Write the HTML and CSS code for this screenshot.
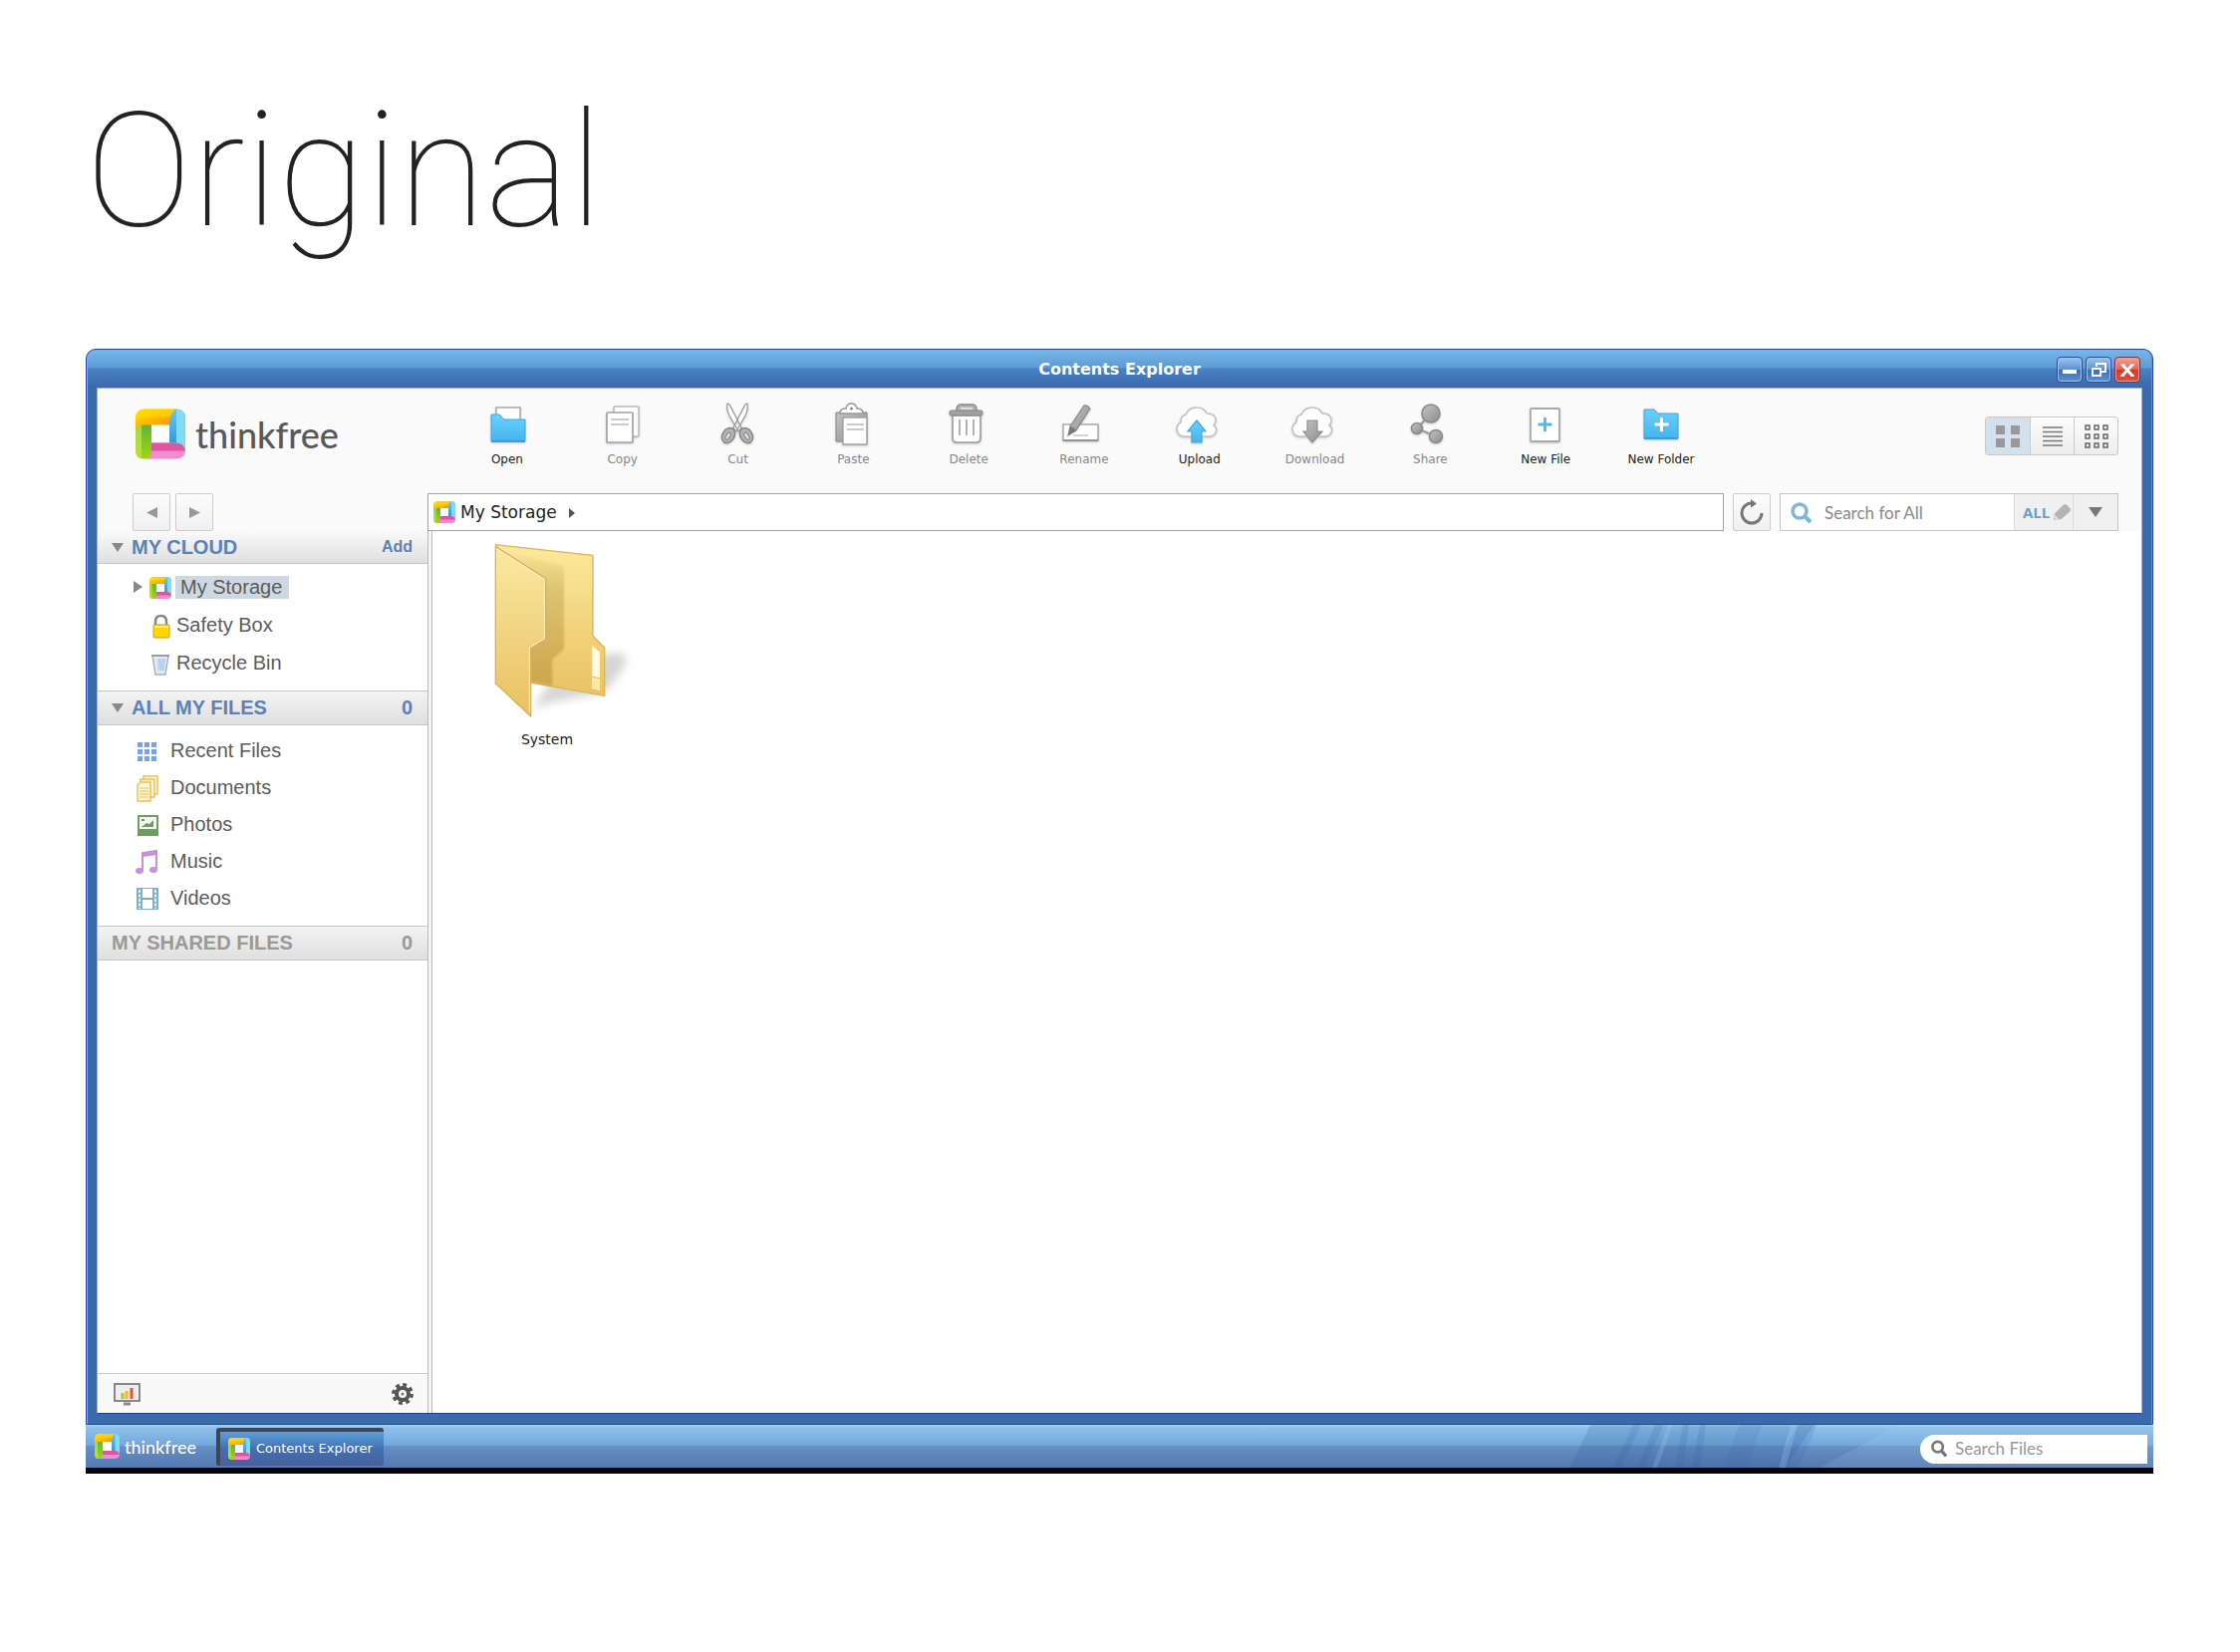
FILE: index.html
```html
<!DOCTYPE html>
<html lang="en">
<head>
<meta charset="utf-8">
<title>Contents Explorer</title>
<link rel="stylesheet" href="styles.css">
</head>
<body>
<svg class="defs" aria-hidden="true">
  <defs>
    <linearGradient id="g-blue" x1="0" y1="0" x2="0" y2="1"><stop offset="0" stop-color="#68d2fb"/><stop offset="1" stop-color="#47b3ec"/></linearGradient>
    <linearGradient id="g-grey" x1="0" y1="0" x2="1" y2="1"><stop offset="0" stop-color="#c4c4c4"/><stop offset="1" stop-color="#8c8c8c"/></linearGradient>
    <linearGradient id="l-yellow" x1="0" y1="0" x2="1" y2="1"><stop offset="0" stop-color="#ffe800"/><stop offset="1" stop-color="#fb8200"/></linearGradient>
    <linearGradient id="l-blue" x1="0" y1="0" x2="0" y2="1"><stop offset="0" stop-color="#6cc4f0"/><stop offset="1" stop-color="#2890d6"/></linearGradient>
    <linearGradient id="l-green" x1="0" y1="0" x2="0" y2="1"><stop offset="0" stop-color="#5cb040"/><stop offset="1" stop-color="#9fd610"/></linearGradient>
    <linearGradient id="f-back" x1="0" y1="0" x2="0" y2="1"><stop offset="0" stop-color="#fbe99c"/><stop offset="1" stop-color="#eac262"/></linearGradient>
    <linearGradient id="f-front" x1="0" y1="0" x2="0" y2="1"><stop offset="0" stop-color="#fbe9a2"/><stop offset="1" stop-color="#e8c062"/></linearGradient>
    <linearGradient id="f-shade" x1="0" y1="0" x2="0" y2="1"><stop offset="0" stop-color="#a58c3c" stop-opacity="0"/><stop offset=".3" stop-color="#a58c3c" stop-opacity=".32"/><stop offset="1" stop-color="#a07828" stop-opacity=".4"/></linearGradient>
    <filter id="blur" x="-30%" y="-30%" width="160%" height="160%"><feGaussianBlur stdDeviation="12"/></filter>
    <filter id="soft" x="-10%" y="-10%" width="120%" height="120%"><feGaussianBlur stdDeviation="3"/></filter>
    <symbol id="logo" viewBox="0 0 50 50">
      <path d="M15 15h20v20H15z" fill="#fff"/>
      <path d="M0 12h16v38H8q-8 0-8-9z" fill="url(#l-green)"/>
      <path d="M0 14l6 2v34q-6-1-6-9z" fill="#c3e04a" opacity=".75"/>
      <path d="M13 34h28q9 1 9 8t-9 8H12q5-3 4-16z" fill="#f58ad0"/>
      <path d="M16 34h25q8 0 9 8H16z" fill="#de56a0"/>
      <path d="M34 5q3-5 8-5 8 1 8 9v32q-2-7-9-7h-7z" fill="url(#l-blue)"/>
      <path d="M41 0q9 0 9 9v32q-2-7-9-7z" fill="#7fdcf6"/>
      <path d="M9 0h32q-7 3-7 16H8q-6 0-8 5V9q0-9 9-9z" fill="url(#l-yellow)"/>
      <path d="M9 0h32q-4 2-6 8H1q1-8 8-8z" fill="#ffd800" opacity=".65"/>
    </symbol>
    <symbol id="cloud" viewBox="0 0 44 44">
      <path d="M9 34q-7 0-8-7 0-5 4-7 0-7 5-8 3-7 11-7 7 0 10 6 9 0 9 7 0 3-2 5 4 3 2 7-2 4-7 4z" fill="#fff" stroke="#c2c2c2" stroke-width="1.6"/>
    </symbol>
  </defs>
</svg>

<h1 class="heading">Original</h1>

<main class="desktop">
  <section class="window">
    <header class="titlebar">
      <h2 class="titlebar-text">Contents Explorer</h2>
      <div class="window-buttons">
        <button class="win-btn" aria-label="Minimize"><svg viewBox="0 0 26 26"><rect x="6" y="13" width="14" height="4" fill="#fff"/></svg></button>
        <button class="win-btn" aria-label="Restore"><svg viewBox="0 0 26 26"><path d="M11 10V7h9v8h-4M7 12h8v7H7z" fill="none" stroke="#fff" stroke-width="2"/></svg></button>
        <button class="win-btn win-close" aria-label="Close"><svg viewBox="0 0 26 26"><path d="M8 8l10 11M18 8L8 19" stroke="#fff" stroke-width="3"/><path d="M6.500 8h4M16 8h4M6 19h4M16 19h4" stroke="#fff" stroke-width="1.500"/></svg></button>
      </div>
    </header>

    <div class="client">
      <div class="toolbar">
        <a class="brand" href="#"><svg class="brand-logo"><use href="#logo"/></svg><span>thinkfree</span></a>
        <nav class="actions">
          <button class="action"><svg viewBox="0 0 44 44"><path d="M11 20V5h24v15" fill="#fff" stroke="#aaa" stroke-width="1.500"/><path d="M6 39V12h8l5 5h21v22z" fill="url(#g-blue)" stroke="#45a5e0"/><path d="M6 39h34" stroke="#2e96e0" stroke-width="1.500"/></svg>Open</button>
          <button class="action is-off"><svg viewBox="0 0 44 44"><rect x="13" y="4" width="25" height="30" rx="1" fill="#fff" stroke="#bbb" stroke-width="1.500"/><rect x="6" y="10" width="26" height="30" rx="1" fill="#fff" stroke="#a2a2a2" stroke-width="1.700"/><path d="M10 17h18M10 22h18" stroke="#999" stroke-width="1.200"/></svg>Copy</button>
          <button class="action is-off"><svg viewBox="0 0 44 44"><path d="M11 1q-1 6 2 12l9 16 3-4L13 2zM31 1q1 6-2 12l-9 16-3-4L29 2z" fill="#fff" stroke="#999" stroke-width="1.200"/><ellipse cx="12" cy="33" rx="6" ry="8" transform="rotate(32 12 33)" fill="#b4b4b4" stroke="#858585" stroke-width="1.400"/><ellipse cx="30" cy="33" rx="6" ry="8" transform="rotate(-32 30 33)" fill="#b4b4b4" stroke="#858585" stroke-width="1.400"/><ellipse cx="11.500" cy="34" rx="2" ry="4" transform="rotate(32 12 34)" fill="#ddd" stroke="#808080"/><ellipse cx="30.500" cy="34" rx="2" ry="4" transform="rotate(-32 30 34)" fill="#ddd" stroke="#808080"/></svg>Cut</button>
          <button class="action is-off"><svg viewBox="0 0 44 44"><path d="M5 10h31v29H5z" fill="url(#g-grey)" stroke="#888"/><path d="M9 11q0-5 6-5 1-5 5.500-5T26 6q6 0 6 5z" fill="#fff" stroke="#999" stroke-width="1.400"/><circle cx="20.500" cy="6" r="1.500" fill="#888"/><rect x="12" y="15" width="24" height="27" fill="#fff" stroke="#a2a2a2" stroke-width="1.500"/><path d="M16 22h17M16 27h17" stroke="#999" stroke-width="1.200"/></svg>Paste</button>
          <button class="action is-off"><svg viewBox="0 0 44 44"><path d="M10 8q0-6 4-6h12q4 0 4 6" fill="#b4b4b4" stroke="#8a8a8a" stroke-width="1.500"/><path d="M14 6h12" stroke="#eee" stroke-width="1.500"/><path d="M6 13h28v23q0 4-4 4H10q-4 0-4-4z" fill="#fff" stroke="#9a9a9a" stroke-width="1.600"/><rect x="3" y="8" width="33" height="5" rx="1.500" fill="#a0a0a0" stroke="#858585"/><path d="M13 17v16M20 17v16M27 17v16" stroke="#999" stroke-width="1.500"/></svg>Delete</button>
          <button class="action is-off"><svg viewBox="0 0 44 44"><rect x="1" y="22" width="35" height="16" fill="#fff" stroke="#aaa" stroke-width="1.500"/><path d="M1 38h35" stroke="#888" stroke-width="1.500"/><path d="M11 33h15" stroke="#aaa"/><path d="M6 33l2-9L22 3q3-1 6 3l-14 22z" fill="url(#g-grey)" stroke="#8a8a8a" stroke-width="1.200"/><path d="M6 33l2-9q4 1 6 4z" fill="#777"/></svg>Rename</button>
          <button class="action"><svg viewBox="0 0 44 44"><use href="#cloud" x="-2" width="44" height="44"/><path d="M19 18l9 11h-4v11H14V29h-4z" fill="url(#g-blue)" stroke="#45a5e0" stroke-width="1.200"/></svg>Upload</button>
          <button class="action is-off"><svg viewBox="0 0 44 44"><use href="#cloud" x="-2" width="44" height="44"/><path d="M14 18h10v11h5L19 40l-9-11h4z" fill="url(#g-grey)" stroke="#909090" stroke-width="1.200"/></svg>Download</button>
          <button class="action is-off"><svg viewBox="0 0 44 44"><path d="M23 11L9 26l19 8" fill="none" stroke="#999" stroke-width="2"/><g fill="url(#g-grey)" stroke="#8a8a8a" stroke-width="1.500"><circle cx="23" cy="11" r="9"/><circle cx="9" cy="26" r="5.500"/><circle cx="28" cy="34" r="6.500"/></g></svg>Share</button>
          <button class="action"><svg viewBox="0 0 44 44"><rect x="7" y="6" width="29" height="33" rx="1" fill="#fff" stroke="#aaa" stroke-width="1.800"/><path d="M21.500 15v14M14.500 22h14" stroke="#52b8ea" stroke-width="2.800"/></svg>New File</button>
          <button class="action"><svg viewBox="0 0 44 44"><path d="M5 36V7h10l4 4h20v25z" fill="url(#g-blue)" stroke="#45a5e0"/><path d="M5 36h34" stroke="#2e96e0" stroke-width="1.500"/><path d="M22.500 15v14M15.500 22h14" stroke="#fff" stroke-width="3"/></svg>New Folder</button>
        </nav>
        <div class="views" role="group" aria-label="View">
          <button class="view is-on" aria-label="Large icons"><svg viewBox="0 0 24 24"><path d="M0 1h9v9H0zM15 1h9v9h-9zM0 14h9v9H0zM15 14h9v9h-9z" fill="#999"/></svg></button>
          <button class="view" aria-label="List"><svg viewBox="0 0 24 24"><path d="M2 3h20M2 7.500h20M2 12h20M2 16.500h20M2 21h20" stroke="#777" stroke-width="1.500"/></svg></button>
          <button class="view" aria-label="Small icons"><svg viewBox="0 0 24 24"><g fill="none" stroke="#666" stroke-width="1.500"><path d="M1 1h4v4H1zM10 1h4v4h-4zM19 1h4v4h-4zM1 10h4v4H1zM10 10h4v4h-4zM19 10h4v4h-4zM1 19h4v4H1zM10 19h4v4h-4zM19 19h4v4h-4z"/></g></svg></button>
        </div>
      </div>

      <div class="locbar">
        <div class="history">
          <button class="square" aria-label="Back"><svg viewBox="0 0 12 12"><path d="M12 0v12L0 6z" fill="#999"/></svg></button>
          <button class="square" aria-label="Forward"><svg viewBox="0 0 12 12"><path d="M0 0v12l12-6z" fill="#999"/></svg></button>
        </div>
        <div class="address"><svg class="mini-logo"><use href="#logo"/></svg><a href="#">My Storage</a><svg class="crumb" viewBox="0 0 6 10"><path d="M0 0v10l6-5z" fill="#555"/></svg></div>
        <button class="square" aria-label="Refresh"><svg class="refresh" viewBox="0 0 24 26"><path d="M12 4a10 10 0 1 0 10 10" fill="none" stroke="#777" stroke-width="3"/><path d="M11 0l6 4.500-6 4z" fill="#777"/></svg></button>
        <form class="search">
          <label class="search-field"><svg viewBox="0 0 22 22"><circle cx="9" cy="9" r="7" fill="none" stroke="#7fb6e0" stroke-width="3.500"/><path d="M14 14l6 6" stroke="#7fb6e0" stroke-width="4"/></svg><input type="text" placeholder="Search for All" aria-label="Search for All"></label>
          <button type="button" class="scope">ALL<svg viewBox="0 0 18 18"><path d="M0 17l1-7 9-9q2-1 3-1l5 5q0 2-1 3l-9 8z" fill="#b3b3b3"/><path d="M1 17v-6l5 5z" fill="#ddd"/></svg></button>
          <button type="button" class="scope-menu" aria-label="Search options"><svg viewBox="0 0 14 10"><path d="M0 0h14L7 10z" fill="#777"/></svg></button>
        </form>
      </div>

      <div class="panes">
        <aside class="sidebar">
          <div class="group-head"><svg class="tri" viewBox="0 0 12 9"><path d="M0 0h12L6 9z" fill="#888"/></svg><h3>MY CLOUD</h3><button class="add">Add</button></div>
          <ul class="tree cloud-list">
            <li><svg class="expand" viewBox="0 0 9 12"><path d="M0 0v12l9-6z" fill="#888"/></svg><svg class="icon"><use href="#logo"/></svg><a class="is-current" href="#">My Storage</a></li>
            <li><span class="expand"></span><svg class="icon" viewBox="0 0 22 24"><path d="M6 13V8q0-6 5.500-6T17 8v5" fill="none" stroke="#888" stroke-width="2.500"/><rect x="4" y="11" width="16" height="13" rx="1" fill="#ffd800" stroke="#c8a000"/><path d="M5 13h14" stroke="#fff07a" stroke-width="2"/></svg><a href="#">Safety Box</a></li>
            <li><span class="expand"></span><svg class="icon" viewBox="0 0 22 24"><path d="M3 4h16l-3 19H6z" fill="#dfeaf6" stroke="#aab4be" stroke-width="1.500"/><path d="M8 7h8l-1 12H9z" fill="#b5d3f2"/><path d="M2 4h18" stroke="#8a9096" stroke-width="1.500"/></svg><a href="#">Recycle Bin</a></li>
          </ul>
          <div class="group-head"><svg class="tri" viewBox="0 0 12 9"><path d="M0 0h12L6 9z" fill="#888"/></svg><h3>ALL MY FILES</h3><span class="count">0</span></div>
          <ul class="tree files-list">
            <li><svg class="icon" viewBox="0 0 24 24"><path d="M2 3h5v5H2zM9 3h5v5H9zM16 3h5v5h-5zM2 10h5v5H2zM9 10h5v5H9zM16 10h5v5h-5zM2 17h5v5H2zM9 17h5v5H9zM16 17h5v5h-5z" fill="#74a3ea"/></svg><a href="#">Recent Files</a></li>
            <li><svg class="icon" viewBox="0 0 24 24"><g fill="#fff6dc" stroke="#f2bd52" stroke-width="1.400"><path d="M8 0h14v18H8z"/><path d="M5 3h14v18H5z"/><path d="M2 9l3-3h10v19H2z"/></g><path d="M4 12h9M4 15h9M4 18h9M4 21h9" stroke="#f2bd52"/></svg><a href="#">Documents</a></li>
            <li><svg class="icon" viewBox="0 0 24 24"><path d="M2 2h21v21H2z" fill="#729a66"/><path d="M4 4h17v12H4z" fill="#f2f7f0"/><path d="M6 14l5-4 3 1 4-4v7zM6 6h3v2H6z" fill="#729a66"/></svg><a href="#">Photos</a></li>
            <li><svg class="icon" viewBox="0 0 24 24"><path d="M7 21V3l14-2v18" fill="none" stroke="#c68fd8" stroke-width="2"/><path d="M7 3l14-2v4L7 7z" fill="#c68fd8"/><ellipse cx="4" cy="21" rx="4" ry="3" fill="#c68fd8"/><ellipse cx="18" cy="20" rx="4" ry="3" fill="#c68fd8"/></svg><a href="#">Music</a></li>
            <li><svg class="icon" viewBox="0 0 24 24"><path d="M1 1h22v22H1z" fill="#7fb0c6"/><path d="M7 2h10v9H7zM7 13h10v9H7z" fill="#fff"/><path d="M4 3v19M20 3v19" stroke="#e4f1f6" stroke-width="2" stroke-dasharray="3 1.500"/></svg><a href="#">Videos</a></li>
          </ul>
          <div class="group-head is-muted"><h3>MY SHARED FILES</h3><span class="count">0</span></div>
          <div class="side-foot">
            <button class="plain" aria-label="Usage"><svg width="28" height="24" viewBox="0 0 28 24"><rect x="1" y="2" width="25" height="17" fill="#eee" stroke="#888" stroke-width="2"/><path d="M10 22h7" stroke="#888" stroke-width="3"/><path d="M9 17v-6" stroke="#a6c83c" stroke-width="3"/><path d="M13 17v-8" stroke="#f5b52c" stroke-width="3"/><path d="M18 17V6" stroke="#e8542c" stroke-width="3"/></svg></button>
            <button class="plain" aria-label="Settings"><svg width="22" height="22" viewBox="0 0 22 22"><circle cx="11" cy="11" r="9.200" fill="none" stroke="#555" stroke-width="3.500" stroke-dasharray="3.800 3.425"/><circle cx="11" cy="11" r="6" fill="none" stroke="#555" stroke-width="4"/><circle cx="11" cy="11" r="1.500" fill="#777"/></svg></button>
          </div>
        </aside>
        <div class="splitter"></div>
        <div class="content">
          <button class="file">
            <svg viewBox="102 18 450 570">
              <path d="M285 545L380 395L545 375Q580 385 555 425L500 495L340 525z" fill="#999" opacity=".4" filter="url(#blur)"/>
              <path d="M172 50L465 82V325L500 360V505L278 465z" fill="url(#f-back)" stroke="#dcb45a" stroke-width="4" stroke-linejoin="round"/>
              <path d="M190 65L378 115V365L343 395V474L278 463z" fill="url(#f-shade)" filter="url(#soft)"/>
              <path d="M463 355l23 18v115l-23-5z" fill="#fffbe4"/>
              <path d="M463 450l23 4v34l-23-5z" fill="#fdeaa0"/>
              <path d="M463 448l23 4" stroke="#e0b85c" stroke-width="3"/>
              <path d="M172 55L323 152V335L278 362V567L172 467z" fill="url(#f-front)" stroke="#d8b15a" stroke-width="4" stroke-linejoin="round"/>
              <path d="M178 64L319 154V333L274 360V556" fill="none" stroke="#fff3c8" stroke-width="2.500"/>
            </svg>
            System
          </button>
        </div>
      </div>
    </div>
  </section>

  <footer class="taskbar">
    <svg class="streaks" viewBox="0 0 600 43" preserveAspectRatio="none" aria-hidden="true">
      <g fill="#2d5c9c"><path d="M35 0h225l-30 43H15z" opacity=".2"/><path d="M78 0h8L66 43h-8zM100 0h8L90 43h-8zM128 0h6l-6 43h-8zM145 0h6l-6 43h-8z" opacity=".16"/><path d="M185 0h22l-15 43h-24z" opacity=".1"/><path d="M243 0h20l-20 43h-22z" opacity=".14"/></g>
      <g fill="#b8dcf8"><path d="M113 0h5l-16 43h-5z" opacity=".2"/><path d="M236 0h7l-12 43h-7z" opacity=".25"/><path d="M345 0h255v43H265z" opacity=".14"/></g>
    </svg>
    <a class="start" href="#"><svg><use href="#logo"/></svg><span>thinkfree</span></a>
    <button class="task"><svg><use href="#logo"/></svg>Contents Explorer</button>
    <label class="task-search"><svg viewBox="0 0 18 20"><circle cx="7" cy="8" r="5.500" fill="none" stroke="#777" stroke-width="2.800"/><path d="M11 12l5 6" stroke="#777" stroke-width="3.500"/></svg><input type="text" placeholder="Search Files" aria-label="Search Files"></label>
  </footer>
</main>
</body>
</html>
```

FILE: styles.css
```css
* { box-sizing: border-box; }

body {
  margin: 0;
  min-height: 100vh;
  display: flex;
  flex-direction: column;
  padding: 72px 87px 179px 86px;
  background: #fff;
  font-family: "DejaVu Sans", sans-serif;
  color: #333;
}

button {
  margin: 0;
  padding: 0;
  border: 0;
  background: none;
  font: inherit;
  color: inherit;
}

a { color: inherit; text-decoration: none; }
h1, h2, h3, ul { margin: 0; padding: 0; font-weight: inherit; list-style: none; }
svg { display: block; flex: none; overflow: visible; }
input { min-width: 0; border: 0; padding: 0; background: none; outline: 0; }

.defs { position: absolute; width: 0; height: 0; }

.heading {
  height: 278px;
  font: 100 160px/200px Roboto, "Liberation Sans", sans-serif;
  color: #222;
}

.desktop { flex: 1; display: flex; flex-direction: column; }

/* Window frame */
.window {
  flex: 1;
  display: flex;
  flex-direction: column;
  padding: 0 10px 10px;
  border: 1px solid #2743a0;
  border-radius: 10px 10px 0 0;
  background: linear-gradient(#77b7e8, #5c9bd4 18px, #4a82c4 19px, #3b68ad 38px, #3a6aab 39px);
  box-shadow: inset 1px 1px #7fb0e0, inset -1px 0 #5f93cc;
}

.titlebar {
  height: 38px;
  display: grid;
  grid-template-columns: 1fr auto 1fr;
  align-items: center;
  padding-top: 1px;
}

.titlebar-text {
  grid-column: 2;
  font-size: 16px;
  line-height: 24px;
  font-weight: bold;
  color: #fff;
}

.window-buttons { display: flex; gap: 3px; justify-self: end; padding-right: 2px; }

.win-btn {
  width: 26px;
  height: 26px;
  border: 1px solid #264d9c;
  border-radius: 4px;
  background: linear-gradient(#9cc4ec, #5c92d0 50%, #3c6fb8 51%, #5a90d0);
  box-shadow: inset 0 0 0 1px #a4c8ec;
}
.win-btn svg { width: 26px; height: 26px; margin: -1px; }
.win-close {
  border-color: #7c3050;
  background: linear-gradient(#f6a294, #e2604e 50%, #d03c2c 51%, #d85040);
  box-shadow: inset 0 0 0 1px #f29c90;
}

.client {
  flex: 1;
  display: flex;
  flex-direction: column;
  border: 1px solid #9aaede;
  border-bottom-color: #1f3f96;
  background: #fafafa;
}

/* Toolbar */
.toolbar { height: 105px; display: flex; padding-right: 23px; }

.brand {
  flex: 0 0 353px;
  display: flex;
  gap: 10px;
  padding: 20px 0 0 38px;
  height: 72px;
  font: 500 36px/52px Lato, "Open Sans", sans-serif;
  color: #58595b;
}
.brand-logo { width: 50px; height: 51px; }

.actions { display: flex; flex: 0 1 1274px; }

.action {
  flex: 1;
  display: flex;
  flex-direction: column;
  align-items: center;
  gap: 5px;
  padding-top: 14px;
  font-size: 12px;
  line-height: 16px;
  white-space: nowrap;
  color: #222;
}
.action svg { width: 44px; height: 44px; filter: drop-shadow(0 1px 1px #0003); }
.is-off { color: #888; }

.views {
  display: flex;
  margin: 28px 0 0 auto;
  height: 39px;
  border: 1px solid #c8c8c8;
  border-radius: 3px;
  overflow: hidden;
  background: linear-gradient(#fdfdfd, #ededed);
}
.view { width: 44px; display: grid; place-items: center; }
.view + .view { border-left: 1px solid #ccc; }
.view svg { width: 24px; height: 24px; }
.is-on { background: #d3e0ee; }

/* Location bar */
.locbar { height: 38px; display: flex; gap: 9px; padding-right: 23px; }

.history { flex: 0 0 322px; display: flex; gap: 5px; padding-left: 35px; }

.square {
  flex: none;
  width: 38px;
  height: 38px;
  display: grid;
  place-items: center;
  border: 1px solid #ccc;
  border-radius: 2px;
  background: linear-gradient(#fcfcfc, #f0f0f0);
}
.square svg { width: 11px; height: 11px; }
.square .refresh { width: 24px; height: 26px; }

.address {
  flex: 1;
  display: flex;
  align-items: center;
  padding-left: 5px;
  border: 1px solid #9aa6b2;
  background: #fff;
  font-size: 17px;
  color: #222;
}
.mini-logo { width: 22px; height: 22px; margin-right: 5px; }
.crumb { width: 6px; height: 10px; margin: 2px 0 0 12px; }

.search {
  flex: 0 0 340px;
  display: flex;
  border: 1px solid #c4c4c4;
  background: #f0f0f0;
}
.search-field { flex: 1; display: flex; align-items: center; gap: 12px; padding: 2px 0 0 10px; background: #fff; }
.search-field svg { width: 22px; height: 22px; }
.search-field input { width: 180px; font: 17px/24px Lato, sans-serif; }
.search input::placeholder { color: #888; opacity: 1; }
.scope {
  width: 59px;
  display: flex;
  align-items: center;
  gap: 4px;
  padding-left: 8px;
  border-left: 1px solid #ddd;
  font: bold 15px/24px "Open Sans", sans-serif;
  color: #6f9ccb;
}
.scope svg { width: 17px; height: 17px; }
.scope-menu { width: 45px; display: grid; place-items: center; border-left: 1px solid #ddd; }
.scope-menu svg { width: 14px; height: 10px; }

/* Panes */
.panes { flex: 1; display: flex; font-family: "Liberation Sans", Arial, sans-serif; background: #fff; }

.sidebar { flex: 0 0 331px; display: flex; flex-direction: column; }

.group-head {
  height: 35px;
  display: flex;
  align-items: center;
  padding: 0 15px 0 14px;
  border: solid #c6c6c6;
  border-width: 1px 0;
  background: linear-gradient(#f3f3f3, #dfdfdf);
  font-size: 20px;
  font-weight: bold;
  color: #5a82b8;
}
.group-head:first-child { height: 33px; border-top: 0; background: linear-gradient(#fafafa, #dfdfdf); }
.group-head h3 { font-size: 20px; flex: 1; }
.tri { width: 12px; height: 9px; margin-right: 8px; }
.add { font-size: 16px; font-weight: bold; }
.is-muted { color: #999; }

.tree { font-size: 20px; color: #5c5c5c; }
.tree li { display: flex; align-items: center; }
.cloud-list li { height: 38px; }
.files-list li { height: 37px; }
.cloud-list { padding: 4px 0 9px 36px; }
.files-list { padding: 7px 0 9px 38px; }
.cloud-list .icon { width: 22px; height: 24px; margin: 2px 4px 0 7px; }
.files-list .icon { width: 24px; height: 24px; margin-right: 11px; }
.expand { width: 9px; height: 12px; }
.cloud-list a { padding: 0 1px; line-height: 23px; }
.cloud-list .is-current { padding: 0 7px 0 5px; background: #ced8e2; }

.side-foot {
  height: 40px;
  margin-top: auto;
  display: flex;
  justify-content: space-between;
  align-items: center;
  padding: 0 14px 0 16px;
  border-top: 1px solid #ccc;
  background: #f9f9f9;
}

.splitter { flex: 0 0 5px; border: solid #bbb; border-width: 0 1px; background: #f4f4f4; }

.content { flex: 1; padding: 3px 0 0 40px; }

.file {
  width: 150px;
  display: flex;
  flex-direction: column;
  align-items: center;
  gap: 7px;
  font: 14px/18px "DejaVu Sans", sans-serif;
  color: #222;
}
.file svg { width: 150px; height: 190px; }

/* Taskbar */
.taskbar {
  position: relative;
  height: 49px;
  display: flex;
  align-items: center;
  padding: 0 6px 0 9px;
  border-bottom: 6px solid #050505;
  background: linear-gradient(#a8d4f6, #8ec0ea 3px, #74a8dc 20px, #658fc4 22px, #5479b0);
  color: #fff;
}
.streaks { position: absolute; top: 0; right: 0; width: 600px; height: 43px; }

.start { flex: 0 0 122px; display: flex; align-items: center; gap: 5px; font: 500 18px/24px Lato, sans-serif; }
.start svg { width: 25px; height: 25px; }

.task {
  position: relative;
  height: 38px;
  display: flex;
  align-items: center;
  gap: 6px;
  padding: 0 11px 0 8px;
  border: solid #3c4654;
  border-width: 4px 0 0 4px;
  border-radius: 3px;
  background: linear-gradient(#5aa0dc, #4470b0 50%, #48609c);
  font-size: 13px;
}
.task svg { width: 22px; height: 22px; }

.task-search {
  position: relative;
  width: 228px;
  height: 29px;
  display: flex;
  align-items: center;
  gap: 7px;
  margin: 5px 0 0 auto;
  padding-left: 11px;
  border-radius: 15px 0 0 15px;
  background: #fff;
}
.task-search svg { width: 17px; height: 20px; }
.task-search input { width: 180px; font: 17px/24px Lato, sans-serif; }
.task-search input::placeholder { color: #999; opacity: 1; }
```
